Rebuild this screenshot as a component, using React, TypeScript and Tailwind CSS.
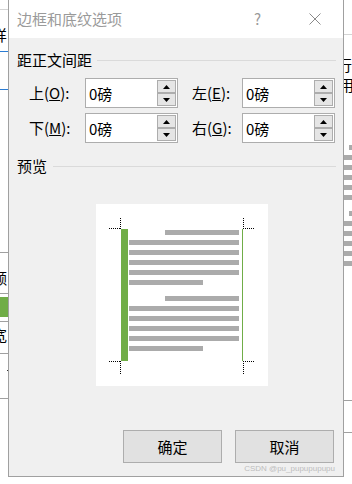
import React from "react";

function Spin() {
  return (
    <div className="flex flex-col py-px pr-px">
      <div className="flex h-[13px] w-[19px] items-center justify-center border border-[#adadad] bg-[#e5e5e5]">
        <svg width="7" height="4" viewBox="0 0 7 4">
          <polygon points="3.5,0 7,4 0,4" fill="#000" />
        </svg>
      </div>
      <div className="flex h-[13px] w-[19px] items-center justify-center border border-[#adadad] bg-[#e5e5e5]">
        <svg width="7" height="4" viewBox="0 0 7 4">
          <polygon points="0,0 7,0 3.5,4" fill="#000" />
        </svg>
      </div>
    </div>
  );
}

function Field() {
  return (
    <div className="flex h-[30px] w-[93px] items-stretch border border-[#adadad] bg-white">
      <div className="flex flex-1 items-center pl-[3px] text-[15px] leading-none text-black">0磅</div>
      <Spin />
    </div>
  );
}

function Label({ zh, k, wide }: { zh: string; k: string; wide?: boolean }) {
  return (
    <div className={`${wide ? "w-[56px]" : "ml-[14px] w-[50px]"} text-[15px] leading-[20px] text-black`}>
      {zh}(<span className="underline">{k}</span>):
    </div>
  );
}

function Preview() {
  const full = [36, 46, 56, 66, 102, 112, 122, 132];
  const dots = (x1: number, y1: number, x2: number, y2: number, key: string) => (
    <line key={key} x1={x1} y1={y1} x2={x2} y2={y2} stroke="#000" strokeWidth="1" strokeDasharray="1 1" />
  );
  return (
    <svg width="172" height="182" viewBox="0 0 172 182" className="block">
      <rect x="0" y="0" width="172" height="182" fill="#fff" />
      {dots(13, 24.5, 25, 24.5, "a")}
      {dots(24.5, 14, 24.5, 25, "b")}
      {dots(13, 157.5, 25, 157.5, "c")}
      {dots(24.5, 157, 24.5, 170, "d")}
      {dots(147, 24.5, 159, 24.5, "e")}
      {dots(147.5, 14, 147.5, 25, "f")}
      {dots(147, 157.5, 159, 157.5, "g")}
      {dots(147.5, 157, 147.5, 170, "h")}
      <rect x="25" y="25" width="7" height="132" fill="#70ad47" />
      <rect x="146" y="25" width="1" height="132" fill="#70ad47" />
      <rect x="69" y="26" width="74" height="5" fill="#ababab" />
      <rect x="69" y="92" width="74" height="5" fill="#ababab" />
      {full.map((y) => (
        <rect key={y} x="33" y={y} width="110" height="5" fill="#ababab" />
      ))}
      <rect x="33" y="76" width="74" height="5" fill="#ababab" />
      <rect x="33" y="142" width="74" height="5" fill="#ababab" />
    </svg>
  );
}

function BarGroup() {
  return (
    <div className="flex flex-col gap-[5px]">
      <div className="h-[5px] w-[3px] self-end bg-[#ababab]" />
      <div className="h-[5px] w-[8px] bg-[#ababab]" />
      <div className="h-[5px] w-[8px] bg-[#ababab]" />
      <div className="h-[5px] w-[8px] bg-[#ababab]" />
      <div className="h-[5px] w-[8px] bg-[#ababab]" />
      <div className="h-[5px] w-[8px] bg-[#ababab]" />
    </div>
  );
}

export default function App() {
  return (
    <div className="flex h-[484px] w-[352px] overflow-hidden bg-white font-['Noto_Sans_CJK_SC',sans-serif] text-black">
      {/* left strip of the document behind */}
      <div className="flex w-[8px] shrink-0 flex-col overflow-hidden">
        <div className="mt-[9px] h-px w-[8px] bg-[#d4d4d4]" />
        <div className="ml-[-8px] mt-[15px] h-[20px] text-[15px] leading-[20px]">样</div>
        <div className="mt-[6px] h-px w-[8px] bg-[#2b7cd3]" />
        <div className="mt-[37px] h-px w-[8px] bg-[#2b7cd3]" />
        <div className="mt-[162px] h-px w-[8px] bg-[#a0a0a0]" />
        <div className="ml-[-8px] mt-[15px] h-[20px] text-[15px] leading-[20px]">额</div>
        <div className="mt-[5px] h-px w-[8px] bg-[#a0a0a0]" />
        <div className="mt-[3px] h-[20px] w-[8px] bg-[#70ad47]" />
        <div className="mt-[4px] h-px w-[8px] bg-[#a0a0a0]" />
        <div className="ml-[-8px] mt-[3px] h-[20px] text-[15px] leading-[20px]">宽</div>
        <div className="mt-[8px] h-px w-[8px] bg-[#a0a0a0]" />
        <div className="ml-[7px] mt-[16px] h-px w-px bg-[#333]" />
        <div className="mt-[27px] h-px w-[8px] bg-[#a0a0a0]" />
      </div>

      {/* dialog window */}
      <div className="flex h-[477px] w-[336px] shrink-0 flex-col border-x border-b border-[#a0a0a0] bg-[#f0f0f0]">
        <div className="flex h-[38px] items-center bg-white pl-[8px] text-[15px] text-[#9a9a9a]">
          <span className="leading-[20px]">边框和底纹选项</span>
          <span className="ml-auto leading-[20px]">?</span>
          <svg width="12" height="12" viewBox="0 0 12 12" className="ml-[48px] mr-[22px]">
            <line x1="0.5" y1="0.5" x2="11.5" y2="11.5" stroke="#8a8a8a" strokeWidth="1" />
            <line x1="11.5" y1="0.5" x2="0.5" y2="11.5" stroke="#8a8a8a" strokeWidth="1" />
          </svg>
        </div>

        <div className="mt-[12px] flex items-center pl-[8px] pr-[7px]">
          <span className="text-[15px] leading-[20px]">距正文间距</span>
          <div className="ml-[5px] h-px flex-1 bg-[#dadada]" />
        </div>

        <div className="mt-[8px] flex flex-col gap-[5px] pl-[20px]">
          <div className="flex items-center">
            <Label zh="上" k="O" wide />
            <Field />
            <Label zh="左" k="E" />
            <Field />
          </div>
          <div className="flex items-center">
            <Label zh="下" k="M" wide />
            <Field />
            <Label zh="右" k="G" />
            <Field />
          </div>
        </div>

        <div className="mt-[13px] flex items-center pl-[8px] pr-[7px]">
          <span className="text-[15px] leading-[20px]">预览</span>
          <div className="ml-[6px] h-px flex-1 bg-[#dadada]" />
        </div>

        <div className="ml-[87px] mt-[28px]">
          <Preview />
        </div>

        <div className="mt-[44px] flex justify-end gap-[13px] pr-[9px]">
          <button className="h-[33px] w-[99px] border border-[#adadad] bg-[#e1e1e1] text-[15px] leading-none text-black">确定</button>
          <button className="h-[33px] w-[99px] border border-[#adadad] bg-[#e1e1e1] text-[15px] leading-none text-black">取消</button>
        </div>
        <div className="mt-[1px] pr-[8px] text-right font-['Liberation_Sans',sans-serif] text-[8px] leading-[10px] text-[#bdbdbd]">
          CSDN @pu_pupupupupu
        </div>
      </div>

      {/* right strip of the document behind */}
      <div className="flex w-[8px] shrink-0 flex-col overflow-hidden">
        <div className="mt-[34px] h-px w-[8px] bg-[#d4d4d4]" />
        <div className="ml-[-7px] mt-[20px] h-[20px] text-[15px] leading-[20px]">行</div>
        <div className="ml-[-5px] h-[20px] text-[15px] leading-[20px]">用</div>
        <div className="mt-[50px]">
          <BarGroup />
        </div>
        <div className="mt-[11px]">
          <BarGroup />
        </div>
        <div className="mt-[134px] h-px w-[8px] bg-[#a0a0a0]" />
        <div className="mt-[31px] h-px w-[8px] bg-[#a0a0a0]" />
      </div>
    </div>
  );
}
